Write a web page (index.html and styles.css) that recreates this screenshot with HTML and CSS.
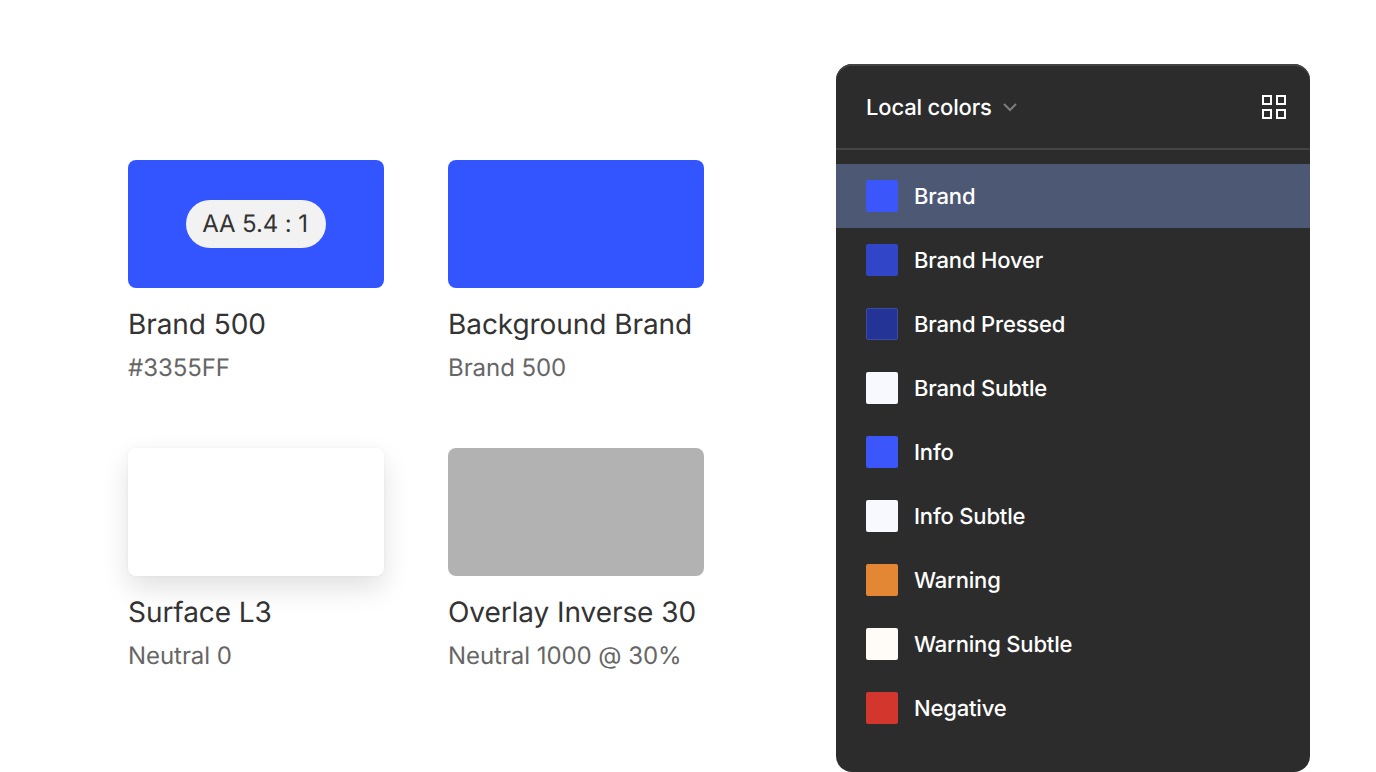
FILE: index.html
```html
<!DOCTYPE html>
<html lang="en">
<head>
<meta charset="utf-8">
<title>Color styles</title>
<link rel="stylesheet" href="styles.css">
</head>
<body>
<main class="page">
  <section class="swatches">
    <article class="swatch">
      <div class="swatch-color brand"><span class="contrast">AA 5.4 : 1</span></div>
      <h2 class="swatch-name">Brand 500</h2>
      <p class="swatch-value">#3355FF</p>
    </article>
    <article class="swatch">
      <div class="swatch-color brand"></div>
      <h2 class="swatch-name">Background Brand</h2>
      <p class="swatch-value">Brand 500</p>
    </article>
    <article class="swatch">
      <div class="swatch-color surface"></div>
      <h2 class="swatch-name">Surface L3</h2>
      <p class="swatch-value">Neutral 0</p>
    </article>
    <article class="swatch">
      <div class="swatch-color overlay"></div>
      <h2 class="swatch-name">Overlay Inverse 30</h2>
      <p class="swatch-value">Neutral 1000 @ 30%</p>
    </article>
  </section>
  <aside class="panel">
    <header class="panel-header">
      <span class="panel-title">Local colors</span>
      <svg class="chevron" width="16" height="10" viewBox="0 0 16 10"><path d="M2 2l6 6 6-6" fill="none" stroke="#7d7d7d" stroke-width="2"/></svg>
      <svg class="grid-icon" width="24" height="24" viewBox="0 0 24 24"><path d="M1 1h8v8H1zM15 1h8v8h-8zM1 15h8v8H1zM15 15h8v8h-8z" fill="none" stroke="#fff" stroke-width="2"/></svg>
    </header>
    <ul class="styles">
      <li class="style selected"><span class="chip brand-chip"></span><span class="label">Brand</span></li>
      <li class="style"><span class="chip hover-chip"></span><span class="label">Brand Hover</span></li>
      <li class="style"><span class="chip pressed-chip"></span><span class="label">Brand Pressed</span></li>
      <li class="style"><span class="chip subtle-chip"></span><span class="label">Brand Subtle</span></li>
      <li class="style"><span class="chip brand-chip"></span><span class="label">Info</span></li>
      <li class="style"><span class="chip subtle-chip"></span><span class="label">Info Subtle</span></li>
      <li class="style"><span class="chip warning-chip"></span><span class="label">Warning</span></li>
      <li class="style"><span class="chip warning-subtle-chip"></span><span class="label">Warning Subtle</span></li>
      <li class="style"><span class="chip negative-chip"></span><span class="label">Negative</span></li>
    </ul>
  </aside>
</main>
</body>
</html>
```
FILE: styles.css
```css
* { box-sizing: border-box; }
body {
  margin: 0;
  background: #fff;
  font-family: Inter, "Liberation Sans", sans-serif;
  text-rendering: geometricPrecision;
  overflow: hidden;
}
.page {
  display: flex;
  justify-content: space-between;
  height: 772px;
  padding: 64px 66px 0 128px;
}
.swatches {
  display: grid;
  grid-template-columns: 256px 256px;
  grid-auto-rows: 224px;
  gap: 64px;
  padding-top: 96px;
}
.swatch-color {
  display: flex;
  align-items: center;
  justify-content: center;
  height: 128px;
  border-radius: 8px;
}
.brand { background: #3355ff; }
.surface {
  background: #fff;
  box-shadow: 0 0 4px rgba(0, 0, 0, .04), 0 12px 28px rgba(0, 0, 0, .12);
}
.overlay { background: #b2b2b2; }
.contrast {
  width: 140px;
  height: 48px;
  padding-right: 2px;
  border-radius: 24px;
  background: #f2f2f2;
  color: #333;
  font-size: 24px;
  letter-spacing: -.12px;
  line-height: 48px;
  text-align: center;
  white-space: nowrap;
}
.swatch-name {
  margin: 16px 0 0;
  color: #333;
  font-size: 28px;
  font-weight: 400;
  letter-spacing: -.07px;
  line-height: 40px;
  white-space: nowrap;
}
.swatch-value {
  margin: 8px 0 0;
  color: #666;
  font-size: 24px;
  letter-spacing: -.06px;
  line-height: 32px;
  white-space: nowrap;
}
.panel {
  width: 474px;
  height: 708px;
  border-radius: 16px;
  background: #2c2c2c;
  color: #fff;
  font-size: 22px;
  font-weight: 500;
  letter-spacing: -.17px;
  line-height: 32px;
  box-shadow: inset 0 2px #444;
  overflow: hidden;
}
.panel-header {
  display: flex;
  align-items: center;
  height: 86px;
  padding: 2px 24px 0 30px;
  border-bottom: 2px solid #444;
}
.panel-title, .label { padding-top: 1px; }
.chevron { margin-left: 10px; }
.grid-icon { margin-left: auto; }
.styles {
  margin: 14px 0 0;
  padding: 0;
  list-style: none;
}
.style {
  display: flex;
  align-items: center;
  gap: 16px;
  height: 64px;
  padding-left: 30px;
}
.selected { background: #4d5874; }
.chip {
  width: 32px;
  height: 32px;
  border-radius: 2px;
}
.brand-chip { background: #3b56fb; }
.hover-chip { background: #3145c9; }
.pressed-chip { background: #243396; border: 1px solid #3f4ca3; }
.subtle-chip { background: #f7f9ff; }
.warning-chip { background: #e48735; }
.warning-subtle-chip { background: #fffbf6; }
.negative-chip { background: #d3362d; }
```
